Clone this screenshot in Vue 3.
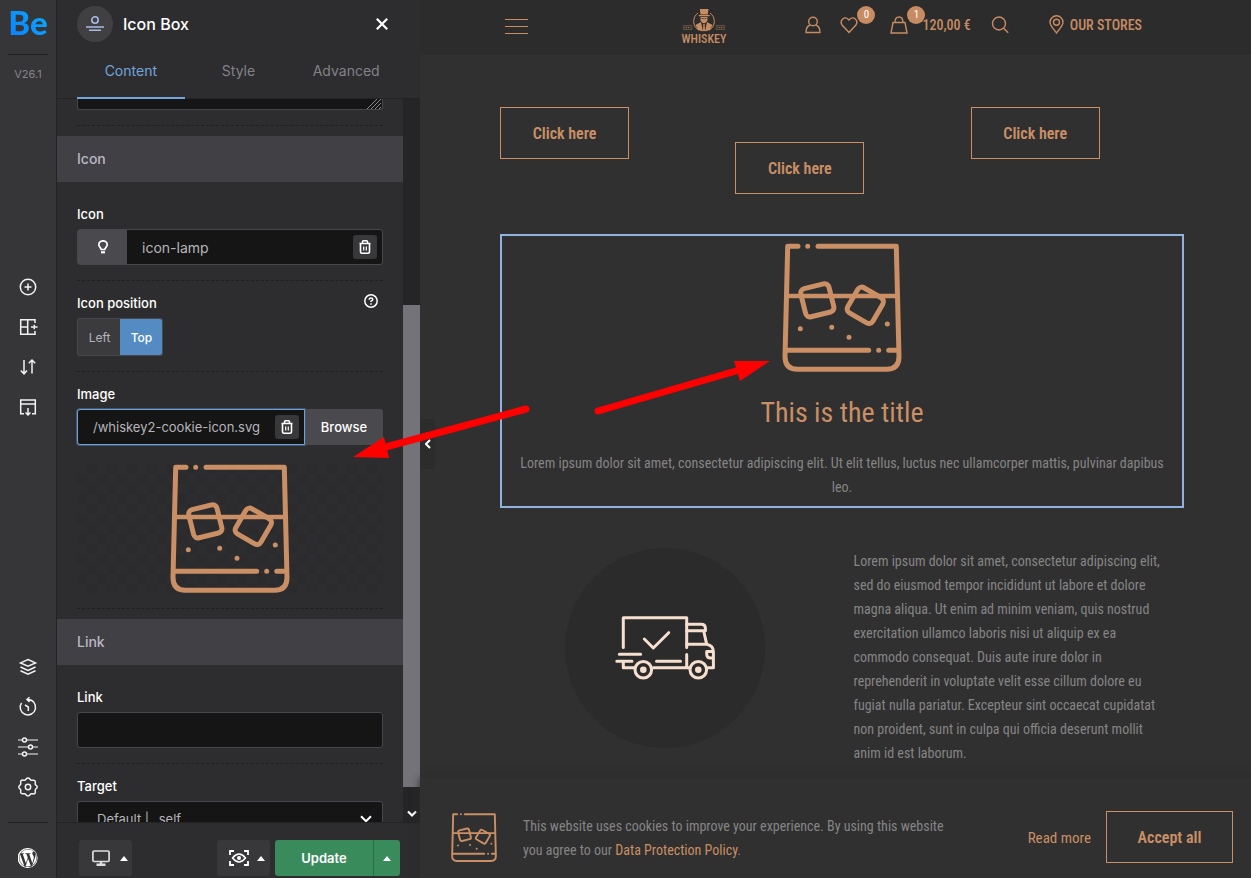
<script setup>
import { ref, h } from 'vue'

const iconName = ref('icon-lamp')
const imagePath = ref('/whiskey2-cookie-icon.svg')
const link = ref('')
const target = ref('self')
const position = ref('Top')

const TrashIcon = () =>
  h('svg', { viewBox: '0 0 14 16', width: 14, height: 16, fill: 'none', stroke: '#fff', 'stroke-width': 1.6, 'aria-hidden': 'true' }, [
    h('path', { d: 'M1.5 4.5h11M2.5 4.5v8.2q0 1.5 1.5 1.5h6q1.5 0 1.5-1.5V4.500M4.500 4.500V2.800q0-1 1-1h3q1 0 1 1v1.700' }),
    h('path', { d: 'M5.700 7.500v4M8.300 7.500v4', 'stroke-width': 1.2 })
  ])

const GlassIcon = () =>
  h('svg', { viewBox: '0 0 120 129', fill: 'none', stroke: '#ca8f65', 'stroke-width': 5, 'stroke-linecap': 'round', 'stroke-linejoin': 'round', preserveAspectRatio: 'none', 'aria-hidden': 'true' }, [
    h('path', { d: 'M16 3.300H5.700L3 113.500q0 12.800 12.500 12.800h89q12.500 0 12.500-12.800L114.300 3.300H36M25.700 3.300h.01' }),
    h('path', { d: 'M5 53h110', 'stroke-width': 4.6 }),
    h('path', { d: 'M4 107.300h82.700M96.700 107.300h.01M106.700 107.300H116' }),
    h('rect', { x: 20.8, y: 42.8, width: 29, height: 29, rx: 4.5, transform: 'rotate(-14 35.300 57.300)' }),
    h('rect', { x: 68.8, y: 47.800, width: 29, height: 29, rx: 4.5, transform: 'rotate(30 83.300 62.300)' }),
    h('path', { d: 'M18.300 85.700h.01M49.700 84.300h.01M67 94.300h.01M105.300 81h.01' })
  ])
</script>

<template>
  <div class="builder">
    <aside class="rail">
      <span class="be">Be</span>
      <hr class="rail-line" />
      <span class="version">V26.1</span>
      <nav class="rail-group top" aria-label="Tools">
        <button type="button" aria-label="Add element">
          <svg viewBox="0 0 20 20"><circle cx="10" cy="10" r="7.700" /><path d="M10 6.500v7M6.500 10h7" /></svg>
        </button>
        <button type="button" aria-label="Layouts">
          <svg viewBox="0 0 20 20"><path d="M17 6V2.700H2.700v14.600H17V14M9.700 2.700v14.600M2.700 10h7M13 10h6.500M16.300 7.800v4.400" /></svg>
        </button>
        <button type="button" aria-label="Reorder">
          <svg viewBox="0 0 20 20"><path d="M6 3v13.500M2.800 13.500L6 16.800l3-3.300M14 16.500V3M10.800 6.200L14 3l3.200 3.200" /></svg>
        </button>
        <button type="button" aria-label="Templates">
          <svg viewBox="0 0 20 20"><path d="M6 16.700H2.700V3h14.600v13.700H14M2.700 7h14.600M10 11v7M7.500 15.500L10 18l2.500-2.500" /></svg>
        </button>
      </nav>
      <nav class="rail-group bottom" aria-label="Settings">
        <button type="button" aria-label="Layers">
          <svg viewBox="0 0 20 20"><path d="M10 2.500l7.500 3.400L10 9.300 2.500 5.900zM2.500 10l7.500 3.400 7.500-3.400M2.500 13.800l7.500 3.400 7.500-3.400" /></svg>
        </button>
        <button type="button" aria-label="History">
          <svg viewBox="0 0 20 20"><path d="M9 2.500h1a7.700 7.700 0 1 1-6.500 3.400M11.500.3L9 2.500 11.500 5M7 8l3.300 2v4" /></svg>
        </button>
        <button type="button" aria-label="Options">
          <svg viewBox="0 0 20 20"><path stroke="#b5b5b7" d="M0 3h4.500M8.500 3H20M0 10h10.500M14.500 10H20M0 17h4.500M8.500 17H20" /><circle cx="6.500" cy="3" r="2" /><circle cx="12.500" cy="10" r="2" /><circle cx="6.500" cy="17" r="2" /></svg>
        </button>
        <button type="button" aria-label="Settings">
          <svg viewBox="0 0 20 20"><path d="M10 1c1.900 0 1.900 1.700 3.200 2.200s2.500-.7 3.700.500-.100 2.400.400 3.700S19.200 8.100 19.200 10s-1.400 1.400-1.900 2.700.800 2.500-.400 3.700-2.400-.100-3.700.400S11.900 19 10 19s-1.900-1.700-3.200-2.200-2.500.700-3.700-.500.100-2.400-.400-3.600S.8 11.900.8 10s1.400-1.400 1.900-2.700-.800-2.500.400-3.700 2.400.100 3.700-.400S8.100 1 10 1z" /><circle cx="10" cy="10" r="2.700" /></svg>
        </button>
      </nav>
      <hr class="rail-line" />
      <a class="wp" href="#" aria-label="WordPress">
        <svg viewBox="0 0 122.500 122.500" width="20" height="20" fill="#fff">
          <path d="M8.700 61.300c0 20.800 12.100 38.700 29.600 47.300L13.300 39.900c-2.900 6.500-4.600 13.700-4.600 21.400zM96.700 58.600c0-6.500-2.300-11-4.300-14.500-2.700-4.300-5.200-8-5.200-12.300 0-4.800 3.700-9.300 8.900-9.300h.7C87.400 13.900 74.900 8.700 61.300 8.700c-18.400 0-34.500 9.400-43.900 23.700 1.200 0 2.400.1 3.400.1 5.500 0 14-.7 14-.7 2.900-.2 3.200 4 .4 4.300 0 0-2.900.3-6 .5l19.200 57.100 11.500-34.600-8.200-22.500c-2.800-.2-5.500-.5-5.500-.5-2.800-.2-2.500-4.500.3-4.300 0 0 8.700.7 13.900.7 5.500 0 14-.7 14-.7 2.900-.2 3.200 4 .4 4.300 0 0-2.900.3-6 .5l19 56.600 5.300-17.500c2.300-7.300 3.600-12.500 3.600-17.100zM62.200 65.900l-15.800 45.800c4.700 1.400 9.700 2.200 14.900 2.200 6.100 0 12-1.100 17.500-3-.1-.2-.3-.5-.4-.7zM107.400 36.100c.2 1.700.4 3.500.4 5.400 0 5.300-1 11.300-4 18.800l-16.100 46.400c15.600-9.100 26.100-26.100 26.100-45.400 0-9.100-2.300-17.700-6.400-25.200z" />
          <path d="M61.300 0a61.300 61.300 0 1 0 0 122.500A61.300 61.300 0 0 0 61.300 0zm0 117a55.700 55.700 0 1 1 0-111.500 55.700 55.700 0 0 1 0 111.500z" />
        </svg>
      </a>
    </aside>

    <section class="panel">
      <header class="panel-head">
        <div class="title-row">
          <span class="badge">
            <svg viewBox="0 0 18 16" width="18" height="16" fill="none" stroke="#a9bbe3" stroke-width="1.600"><circle cx="9" cy="4" r="3.200" /><path d="M0 11h18M3 14.200h12" /></svg>
          </span>
          <h1>Icon Box</h1>
          <button type="button" class="close" aria-label="Close">
            <svg viewBox="0 0 12 12" width="12" height="12" stroke="#fff" stroke-width="2.200"><path d="M.8.8l10.400 10.400M11.200.8L.8 11.200" /></svg>
          </button>
        </div>
        <nav class="tabs">
          <a href="#" class="active">Content</a>
          <a href="#">Style</a>
          <a href="#">Advanced</a>
        </nav>
      </header>

      <div class="scroller">
        <form class="form" @submit.prevent>
          <div class="cut">
            <textarea aria-label="Content" class="tail"></textarea>
            <svg class="grip" viewBox="0 0 16 10" width="16" height="10" stroke="#8a8a8c" stroke-width="1" aria-hidden="true"><path d="M1 10L11 0M5 10L15 0M9 10l6-6M13 10l2-2" /></svg>
          </div>
          <h2>Icon</h2>
          <div class="field first">
            <label for="icon">Icon</label>
            <div class="combo">
              <button type="button" class="lamp" aria-label="Choose icon">
                <svg viewBox="0 0 12 14" width="12" height="14" fill="none" stroke="#fff" stroke-width="1.700"><path d="M4.200 9.500C4.200 7.700 1.800 7 1.800 4.800a4.200 4 0 0 1 8.400 0C10.200 7 7.800 7.700 7.800 9.500z" /><path d="M4 12.300h4" stroke-width="2.200" /></svg>
              </button>
              <input id="icon" v-model="iconName" type="text" />
              <button type="button" class="trash" aria-label="Remove icon"><TrashIcon /></button>
            </div>
          </div>
          <div class="field">
            <div class="label-row">
              <span id="pos" class="label">Icon position</span>
              <button type="button" class="help" aria-label="Help">
                <svg viewBox="0 0 14 14" width="14" height="14" fill="none" stroke="#fff" stroke-width="1.500"><circle cx="7" cy="7" r="6.200" /><path d="M5.200 5.700q0-1.700 1.800-1.700t1.800 1.500Q8.800 6.500 7 7.200v.9M7 9.200v1.500" /></svg>
              </button>
            </div>
            <div class="segmented" role="group" aria-labelledby="pos">
              <button v-for="p in ['Left', 'Top']" :key="p" type="button" :class="{ on: p === position }" :aria-pressed="p === position" @click="position = p">{{ p }}</button>
            </div>
          </div>
          <div class="field">
            <label for="image">Image</label>
            <div class="upload">
              <div class="combo focused">
                <input id="image" v-model="imagePath" type="text" />
                <button type="button" class="trash" aria-label="Remove image"><TrashIcon /></button>
              </div>
              <button type="button" class="browse">Browse</button>
            </div>
            <div class="preview"><GlassIcon /></div>
          </div>
          <h2 class="after">Link</h2>
          <div class="field first">
            <label for="link">Link</label>
            <input id="link" v-model="link" class="plain" type="text" />
          </div>
          <div class="field">
            <label for="target">Target</label>
            <div class="select-wrap">
              <select id="target" v-model="target" class="plain">
                <option value="self">Default | _self</option>
                <option value="blank">New tab | _blank</option>
              </select>
              <svg class="caret" viewBox="0 0 12 8" width="12" height="8" fill="none" stroke="#fff" stroke-width="2"><path d="M1 1.200l5 5 5-5" /></svg>
            </div>
          </div>
        </form>
        <div class="track" aria-hidden="true">
          <div class="thumb"></div>
          <svg viewBox="0 0 10 8" width="10" height="8" fill="none" stroke="#fff" stroke-width="2.200"><path d="M1 1.500l4 4 4-4" /></svg>
        </div>
      </div>

      <footer class="panel-foot">
        <button type="button" class="dark" aria-label="Responsive view">
          <svg viewBox="0 0 18 16" width="18" height="16" fill="none" stroke="#ddd" stroke-width="1.700"><rect x=".9" y="1" width="16.200" height="10.500" rx="1.200" /><path d="M9 11.500V14M4.500 14.700h9" stroke-width="2.400" /></svg>
          <i class="up"></i>
        </button>
        <button type="button" class="dark preview-btn" aria-label="Preview">
          <svg viewBox="0 0 20 16" width="20" height="16" fill="none" stroke="#fff" stroke-width="1.800"><path d="M1 5V1h4M15 1h4v4M19 11v4h-4M5 15H1v-4" /><path d="M3.500 8Q10 .2 16.500 8 10 15.800 3.500 8z" stroke-width="1.500" /><circle cx="10" cy="8" r="2" fill="#fff" stroke="none" /></svg>
          <i class="up"></i>
        </button>
        <div class="update">
          <button type="button">Update</button>
          <button type="button" class="more" aria-label="More update options"><i class="up"></i></button>
        </div>
      </footer>
    </section>

    <main class="site">
      <button type="button" class="collapse" aria-label="Collapse panel">
        <svg viewBox="0 0 6 10" width="6" height="10" fill="none" stroke="#fff" stroke-width="2"><path d="M5 1L1 5l4 4" /></svg>
      </button>
      <header class="site-nav">
        <button type="button" class="burger" aria-label="Menu"><i></i><i></i><i></i></button>
        <a class="logo" href="#" aria-label="Whiskey">
          <svg viewBox="0 0 42 23" width="42" height="23" aria-hidden="true">
            <g fill="none" stroke="#c88c63">
              <path d="M15 4a10.200 10.200 0 0 0 .5 17M27 4a10.200 10.200 0 0 1-.5 17" />
              <path d="M.4 16.500h8.500v4H.4zM33.100 16.500h8.500v4h-8.500z" stroke-width=".5" opacity=".7" />
              <path d="M1.500 18.500h6M34.500 18.500h6" stroke-dasharray="1 .7" stroke-width="1.600" opacity=".7" />
            </g>
            <g fill="#c88c63">
              <path d="M16.800 0h8.700L24.800 5.500h-7.300zM15.500 6h11.500l-.5 1.300h-10.500z" />
              <path d="M17.500 8h7v3.500L22.500 14h-3l-2-2.500zM12.500 16l5.500-3 2 9.500-5-1.500zM29.500 16L24 13l-2 9.500 5-1.500zM20.300 14.800h1.400L22 22h-2z" />
            </g>
            <path d="M18.500 9.500h2M21.700 9.500h1.800" stroke="#2c2c2c" stroke-width=".8" />
          </svg>
          <span>WHISKEY</span>
        </a>
        <div class="actions">
          <a href="#" aria-label="Account"><svg viewBox="0 0 16 18" width="16" height="18"><circle cx="8" cy="5.500" r="4.300" /><path d="M5 9Q1 10.500 1 16.500h14Q15 10.500 11 9" /></svg></a>
          <a href="#" class="heart" aria-label="Wishlist"><svg viewBox="0 0 18 18" width="18" height="18"><path d="M9 16.500L2.300 9.300C-1 5 4.500-1.500 9 4c4.500-5.500 10 1 6.700 5.300z" /></svg><b>0</b></a>
          <a href="#" class="bag"><svg viewBox="0 0 18 18" width="18" height="18" aria-hidden="true"><path d="M3 6.500h12L17 17H1zM5 6.500Q5 1 9 1t4 5.500" /></svg><b>1</b><span>120,00 €</span></a>
          <a href="#" class="search" aria-label="Search"><svg viewBox="0 0 18 18" width="18" height="18"><circle cx="8" cy="7.500" r="6.500" /><path d="M12.700 12.200l4.500 4.500" /></svg></a>
          <a href="#" class="stores"><svg viewBox="0 0 15 19" width="15" height="19" aria-hidden="true"><path d="M7.500 18C4 13.500 1 10.500 1 7.300a6.500 6.500 0 0 1 13 0C14 10.500 11 13.500 7.500 18z" /><circle cx="7.500" cy="7.300" r="3" /></svg><span>OUR STORES</span></a>
        </div>
      </header>

      <div class="content">
        <div class="buttons">
          <a href="#" class="outline">Click here</a>
          <a href="#" class="outline low">Click here</a>
          <a href="#" class="outline">Click here</a>
        </div>
        <article class="icon-box">
          <GlassIcon />
          <h2>This is the title</h2>
          <p>Lorem ipsum dolor sit amet, consectetur adipiscing elit. Ut elit tellus, luctus nec ullamcorper mattis, pulvinar dapibus leo.</p>
        </article>
        <div class="split">
          <div class="disc">
            <svg viewBox="0 0 100 65" width="100" height="65" fill="none" stroke="#f7dfcf" stroke-width="3" stroke-linecap="round" stroke-linejoin="round" aria-hidden="true">
              <path d="M8.300 31.500V1.800h63.400v29.700M71.700 38.500v13M4.300 38.300h21.400M1.800 45.300H17M8.300 45.300v6.400H19M38.500 51.700h35M41.500 45.300h24M29.300 23l9 9 15.400-15.300" />
              <path d="M71.700 8.300h14.500q4 0 4.200 4v2.400H71.700M88.700 15l3 13.300H71.700M91.700 28.300q6.700 1.500 6.700 7.400v16H93M98.400 35.500h-6.700v2.500q0 4 4 4h2.700" />
              <circle cx="28.300" cy="53.700" r="8.300" /><circle cx="83.300" cy="53.700" r="8.300" />
              <g fill="#f7dfcf" stroke="none"><circle cx="28.300" cy="53.700" r="3.300" /><circle cx="83.300" cy="53.700" r="3.300" /></g>
            </svg>
          </div>
          <p>Lorem ipsum dolor sit amet, consectetur adipiscing elit, sed do eiusmod tempor incididunt ut labore et dolore magna aliqua. Ut enim ad minim veniam, quis nostrud exercitation ullamco laboris nisi ut aliquip ex ea commodo consequat. Duis aute irure dolor in reprehenderit in voluptate velit esse cillum dolore eu fugiat nulla pariatur. Excepteur sint occaecat cupidatat non proident, sunt in culpa qui officia deserunt mollit anim id est laborum.</p>
        </div>
      </div>

      <aside class="cookies">
        <GlassIcon />
        <p>This website uses cookies to improve your experience. By using this website you agree to our <a href="#">Data Protection Policy</a>.</p>
        <a href="#" class="read">Read more</a>
        <button type="button" class="outline">Accept all</button>
      </aside>
    </main>

    <svg class="arrows" viewBox="0 0 420 100" width="420" height="100" fill="#f00" stroke="#f00" aria-hidden="true">
      <path d="M176 50L32 89M248 52l145-42" stroke-width="7" stroke-linecap="round" />
      <path d="M3 98l31-20 5 21zM420 2h-36l6 20z" stroke="none" />
    </svg>
  </div>
</template>

<style>
body { background: #303030; }
</style>

<style scoped>
* { box-sizing: border-box; }
.builder { position: relative; display: flex; height: 100vh; overflow: hidden; font-family: Inter, "Noto Sans", sans-serif; font-size: 13px; color: #fff; background: #303030; }
button { font: inherit; color: inherit; border: 0; padding: 0; background: none; cursor: pointer; display: flex; align-items: center; justify-content: center; }
a { text-decoration: none; color: inherit; }
h1, h2, p { margin: 0; font-weight: 400; }

.rail { width: 57px; flex: none; display: flex; flex-direction: column; align-items: center; background: #363638; border-right: 1px solid #242426; }
.be { font: 900 33px/44px Lato, sans-serif; color: transparent; background: linear-gradient(45deg, #0a7cff, #0bb2ff); background-clip: text; -webkit-background-clip: text; }
.rail-line { width: 40px; margin: 0; border: 0; border-top: 1px solid #1f1f21; flex: none; }
.be + .rail-line { margin-top: 10px; }
.version { margin-top: 11px; font-size: 11px; line-height: 16px; color: #85858a; }
.rail-group { display: flex; flex-direction: column; gap: 20px; }
.rail-group button { width: 20px; height: 20px; }
.rail-group svg { width: 20px; height: 20px; fill: none; stroke: #f2f2f2; stroke-width: 1.500; overflow: visible; }
.top { margin-top: auto; }
.bottom { margin-top: 240px; margin-bottom: 25px; }
.wp { display: flex; margin: 25px 0 10px; }

.panel { width: 363px; flex: none; display: flex; flex-direction: column; background: #2d2d2f; }
.panel-head { padding: 6px 20px 0; border-bottom: 1px solid #232325; }
.title-row { display: flex; align-items: center; gap: 10px; height: 36px; }
.badge { width: 36px; height: 36px; border-radius: 50%; background: #404042; display: flex; align-items: center; justify-content: center; }
h1 { font-size: 16px; font-weight: 500; }
.close { margin-left: auto; margin-right: 12px; }
.tabs { display: grid; grid-template-columns: repeat(3, 1fr); margin-top: 2px; margin-bottom: -1px; }
.tabs a { height: 55px; line-height: 54px; font-size: 14px; text-align: center; color: #828288; border-bottom: 2px solid transparent; }
.tabs .active { color: #72a5dc; border-color: #72a5dc; }

.scroller { flex: 1; min-height: 0; display: flex; }
.form { flex: 1; min-width: 0; overflow: hidden; }
.cut { position: relative; margin: 0 20px 10px; height: 27px; border-bottom: 1px dashed #202022; }
.tail { display: block; width: 100%; height: 11px; resize: none; padding: 0; overflow: hidden; background: #151515; border: 1px solid #48474d; border-top: 0; border-radius: 0 0 3px 3px; }
.grip { position: absolute; right: 1px; top: 0; }
.form h2 { height: 46px; line-height: 46px; padding-left: 20px; background: #414045; color: #b9b9c2; font-size: 14px; font-weight: 500; }
.form h2.after { margin-top: 10px; }
.field { margin: 0 20px; padding: 12px 0 15px; border-bottom: 1px dashed #202022; }
.field.first { padding-top: 22px; }
.field label, .label { display: block; height: 20px; line-height: 20px; margin-bottom: 5px; font-weight: 500; }
.label-row { display: flex; justify-content: space-between; }
.help { height: 16px; margin-right: 5px; }
.combo { position: relative; display: flex; height: 36px; flex: 1; min-width: 0; background: #151515; border: 1px solid #48474d; border-radius: 3px; align-items: center; }
.combo input { flex: 1; min-width: 0; height: 34px; padding: 0 15px; font: inherit; font-size: 14px; color: #b5b5ba; background: none; border: 0; outline: 0; }
.lamp { width: 49px; height: 34px; background: #4a494e; }
.trash { width: 24px; height: 24px; margin-right: 5px; flex: none; background: #38383a; border-radius: 3px; }
.segmented { display: flex; width: 86px; height: 38px; border-radius: 3px; overflow: hidden; background: linear-gradient(#3b3b3d, #3b3b3d) padding-box, #48474d; border: 1px solid transparent; }
.segmented button { flex: 1; font-size: 12px; color: #b5b5ba; }
.segmented .on { background: #548bc3; color: #fff; font-weight: 500; margin: -1px; }
.upload { display: flex; }
.combo.focused { border-color: #6ea2da; border-radius: 3px 0 0 3px; box-shadow: 0 0 0 1px #44546a; z-index: 1; }
.combo.focused input { padding-right: 4px; font-size: 13px; }
.browse { width: 78px; background: #4a494e; border-radius: 0 3px 3px 0; font-weight: 500; }
.preview { margin-top: 19px; display: flex; justify-content: center; background: repeating-conic-gradient(#2b2b2d 0 25%, #2d2d2f 0 50%) 0 0 / 20px 20px; }
.preview svg { width: 120px; height: 129px; }
.plain { display: block; width: 100%; height: 36px; padding: 0 19px; font: inherit; color: #b5b5ba; background: #151515; border: 1px solid #48474d; border-radius: 3px; appearance: none; }
.select-wrap { position: relative; }
.caret { position: absolute; right: 11px; top: 14px; }
.track { width: 17px; flex: none; display: flex; flex-direction: column; align-items: center; justify-content: flex-end; background: #252527; padding-bottom: 4px; gap: 23px; }
.thumb { width: 100%; height: 67%; background: #747379; }

.panel-foot { height: 56px; flex: none; display: flex; align-items: flex-start; padding: 17px 20px 0 22px; border-top: 1px solid #232325; }
.dark { width: 53px; height: 36px; gap: 10px; padding-left: 8px; background: #38383a; border-radius: 3px; }
.preview-btn { margin-left: auto; gap: 8px; padding-left: 6px; }
.up { border: 4px solid transparent; border-top: 0; border-bottom: 5px solid #fff; }
.update { display: flex; width: 125px; height: 36px; margin-left: 5px; background: #398b5c; border-radius: 3px; }
.update button { flex: 1; font-weight: 600; }
.update .more { flex: none; width: 27px; border-left: 1px solid #2b6e48; }

.site { position: relative; flex: 1; min-width: 0; display: flex; flex-direction: column; font-family: "Liberation Sans Narrow", "Roboto Condensed", "Liberation Sans", sans-serif; font-size: 14px; line-height: 24px; color: #858585; }
.collapse { position: absolute; left: 0; top: 419px; width: 15px; height: 50px; background: #2c2c2c; border-radius: 0 3px 3px 0; }
.site-nav { height: 55px; flex: none; display: flex; align-items: center; padding: 0 109px 6px 85px; background: #2c2c2c; color: #c88c63; }
.burger { flex-direction: column; gap: 6px; width: 23px; padding-top: 3px; }
.burger i { width: 100%; height: 1px; background: #c88c63; }
.logo { display: flex; flex-direction: column; align-items: center; margin: 5px 79px 0 auto; font-size: 12px; line-height: 14px; font-weight: 500; }
.actions { display: flex; align-items: center; font-weight: 500; }
.actions a { position: relative; display: flex; align-items: center; gap: 6px; }
.actions svg { fill: none; stroke: #c88c63; stroke-width: 1.400; }
.actions b { position: absolute; left: 17px; top: -10px; width: 18px; height: 18px; border-radius: 50%; background: #c88c63; color: #fff; font-size: 11px; line-height: 18px; font-weight: 400; text-align: center; }
.actions .bag b { top: -7px; }
.heart { margin-left: 19px; }
.bag { margin-left: 32px; }
.bag > span { margin-left: 8px; }
.search { margin-left: 20px; }
.stores { margin-left: 40px; }

.content { flex: 1; min-height: 0; overflow: hidden; padding: 52px 67px 0 80px; }
.buttons { display: grid; grid-template-columns: repeat(3, 1fr); gap: 22px; align-items: start; height: 127px; }
.outline { display: flex; align-items: center; justify-content: center; width: 129px; height: 52px; padding-top: 2px; border: 1px solid #ca8f65; color: #ca8f65; font-weight: 600; font-size: 16px; }
.low { margin-top: 35px; }
.icon-box { display: flex; flex-direction: column; align-items: center; height: 274px; padding: 7px 8px 0; border: 2px solid #91b1e0; text-align: center; }
.icon-box > svg { width: 120px; height: 129px; flex: none; }
.icon-box h2 { margin-top: 19px; font-size: 28px; line-height: 44px; color: #ca8f65; }
.icon-box p { margin-top: 16px; }
.split { display: grid; grid-template-columns: 1fr 1fr; gap: 23px; margin-top: 40px; }
.disc { width: 200px; height: 200px; margin: 0 auto; border-radius: 50%; background: #2b2b2b; display: flex; align-items: center; justify-content: center; }
.split p { padding: 1px 14px 0 0; }

.cookies { height: 100px; flex: none; display: flex; align-items: center; padding: 18px 18px 0 31px; background: #303030; box-shadow: 0 0 8px #2b2b2b; }
.cookies > svg { width: 46px; height: 49px; flex: none; }
.cookies p { margin-left: 26px; max-width: 440px; padding-top: 2px; }
.cookies p a, .read { color: #ca8f65; }
.read { margin-left: auto; margin-right: 15px; padding-top: 2px; font-size: 15px; }
.cookies .outline { width: 127px; }

.arrows { position: absolute; left: 350px; top: 359px; pointer-events: none; }
</style>
